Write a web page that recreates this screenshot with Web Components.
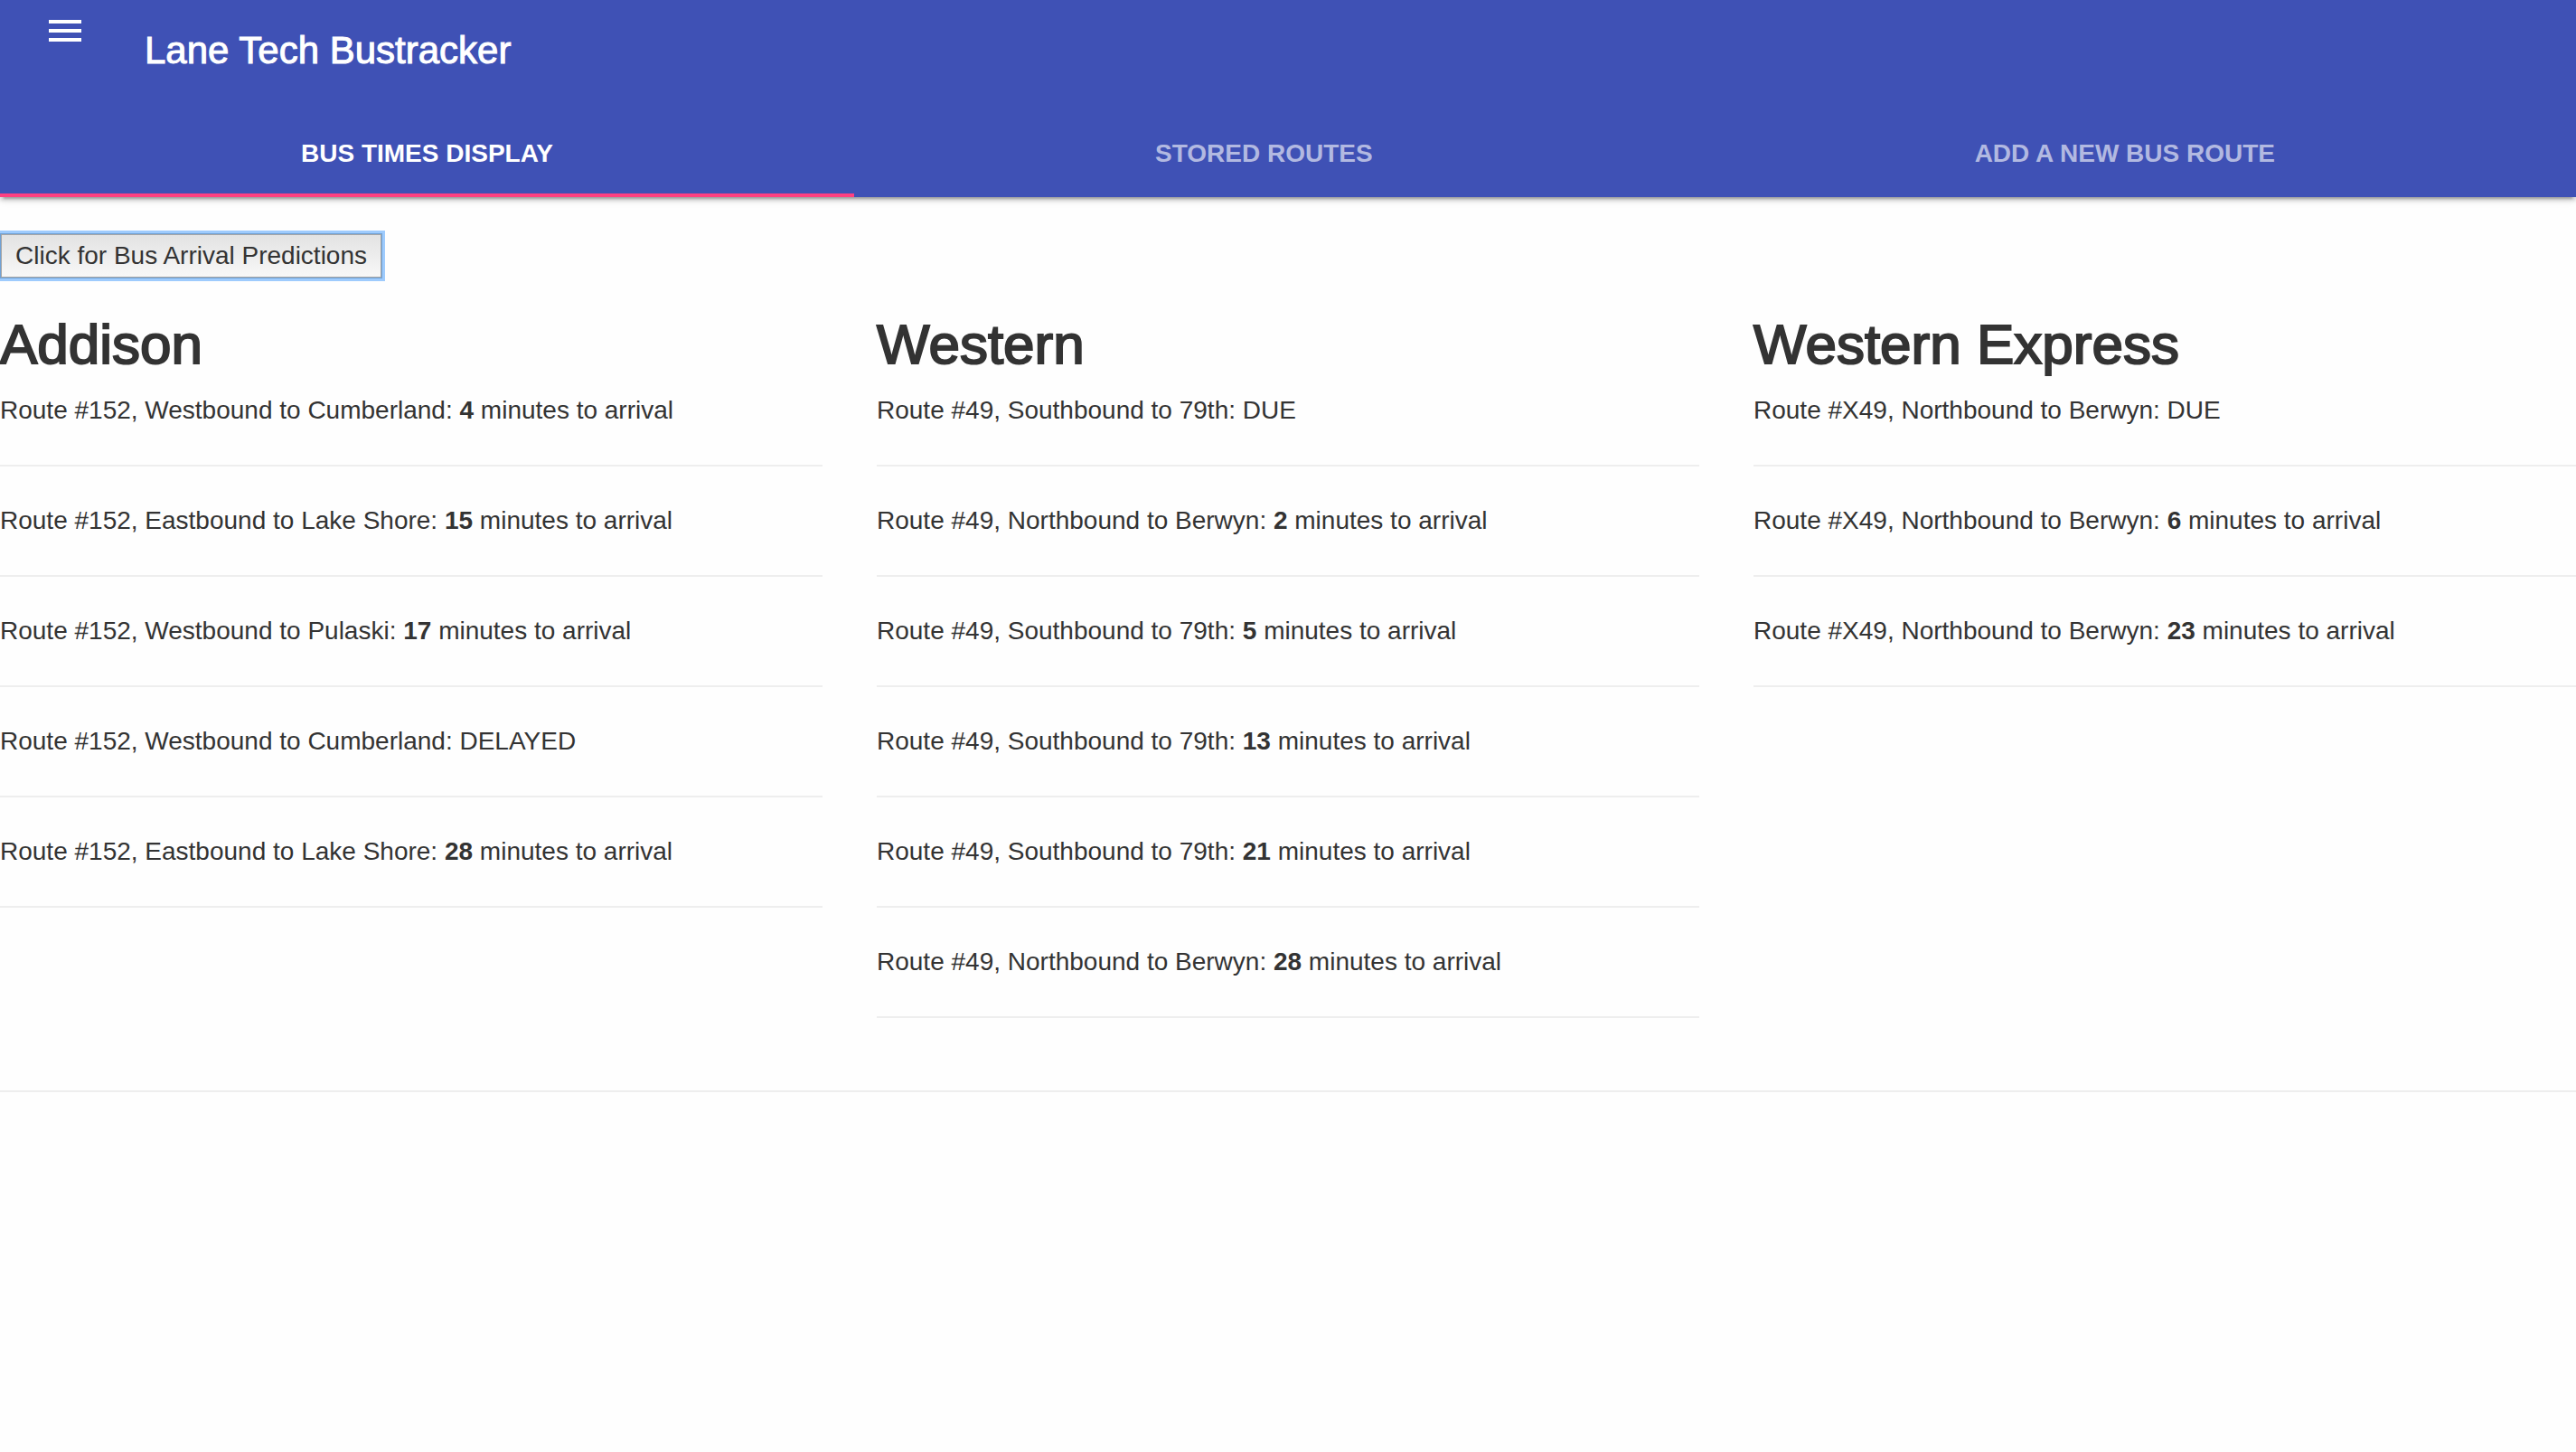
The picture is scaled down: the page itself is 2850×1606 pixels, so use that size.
<!DOCTYPE html>
<html lang="en">
<head>
<meta charset="utf-8">
<title>Lane Tech Bustracker</title>
<style>
  body {
    margin: 0;
    background: #fefefe;
    color: #333;
    font: 28px/40px "Liberation Sans", Arial, sans-serif;
  }
</style>
</head>
<body>
<bus-app>
  <bus-header slot="header" heading="Lane Tech Bustracker">
    <bus-tab active>BUS TIMES DISPLAY</bus-tab>
    <bus-tab>STORED ROUTES</bus-tab>
    <bus-tab>ADD A NEW BUS ROUTE</bus-tab>
  </bus-header>
  <predict-button>Click for Bus Arrival Predictions</predict-button>
  <route-board>
    <route-column heading="Addison">
      <route-arrival route="152" to="Westbound to Cumberland" minutes="4"></route-arrival>
      <route-arrival route="152" to="Eastbound to Lake Shore" minutes="15"></route-arrival>
      <route-arrival route="152" to="Westbound to Pulaski" minutes="17"></route-arrival>
      <route-arrival route="152" to="Westbound to Cumberland" status="DELAYED"></route-arrival>
      <route-arrival route="152" to="Eastbound to Lake Shore" minutes="28"></route-arrival>
    </route-column>
    <route-column heading="Western">
      <route-arrival route="49" to="Southbound to 79th" status="DUE"></route-arrival>
      <route-arrival route="49" to="Northbound to Berwyn" minutes="2"></route-arrival>
      <route-arrival route="49" to="Southbound to 79th" minutes="5"></route-arrival>
      <route-arrival route="49" to="Southbound to 79th" minutes="13"></route-arrival>
      <route-arrival route="49" to="Southbound to 79th" minutes="21"></route-arrival>
      <route-arrival route="49" to="Northbound to Berwyn" minutes="28"></route-arrival>
    </route-column>
    <route-column heading="Western Express">
      <route-arrival route="X49" to="Northbound to Berwyn" status="DUE"></route-arrival>
      <route-arrival route="X49" to="Northbound to Berwyn" minutes="6"></route-arrival>
      <route-arrival route="X49" to="Northbound to Berwyn" minutes="23"></route-arrival>
    </route-column>
  </route-board>
</bus-app>

<script>
  class BaseElement extends HTMLElement {
    connectedCallback() {
      if (this.shadowRoot) return;
      this.attachShadow({ mode: 'open' }).innerHTML = this.render();
    }
  }

  customElements.define('bus-app', class extends BaseElement {
    render() {
      return `
        <style>
          :host { display: block; }
          main { display: flex; flex-direction: column; gap: 40px; padding-top: 40px; }
        </style>
        <slot name="header"></slot>
        <main><slot></slot></main>`;
    }
  });

  customElements.define('bus-header', class extends BaseElement {
    render() {
      return `
        <style>
          :host {
            display: flex;
            flex-direction: column;
            gap: 10px;
            background: #3f51b5;
            color: #fff;
            box-shadow: 0 4px 4px 0 rgba(0,0,0,.14), 0 6px 2px -4px rgba(0,0,0,.2), 0 2px 10px 0 rgba(0,0,0,.12);
          }
          .bar { display: flex; gap: 64px; min-height: 112px; padding: 0 48px; }
          button { align-self: flex-start; margin: 10px 0 0; padding: 0; border: 0; background: none; color: inherit; }
          svg { display: block; width: 48px; height: 48px; fill: currentColor; }
          h1 { align-self: center; margin: 0; font-size: 42px; line-height: 56px; font-weight: 400; -webkit-text-stroke: 1px currentColor; }
          nav { display: flex; }
        </style>
        <div class="bar">
          <button type="button" aria-label="Menu">
            <svg viewBox="0 0 24 24" aria-hidden="true"><path d="M3 18h18v-2H3v2zm0-5h18v-2H3v2zm0-7v2h18V6H3z"/></svg>
          </button>
          <h1>${this.getAttribute('heading')}</h1>
        </div>
        <nav><slot></slot></nav>`;
    }
  });

  customElements.define('bus-tab', class extends BaseElement {
    render() {
      return `
        <style>
          :host { display: block; flex: 1 1 auto; }
          a {
            display: block;
            box-sizing: border-box;
            height: 96px;
            padding: 0 48px;
            font-weight: 700;
            line-height: 96px;
            text-align: center;
            text-decoration: none;
            color: #b2b9e1;
          }
          :host([active]) a { color: #fff; box-shadow: inset 0 -4px #ff4081; }
        </style>
        <a href="#"><slot></slot></a>`;
    }
  });

  customElements.define('predict-button', class extends BaseElement {
    render() {
      return `
        <style>
          :host { display: flex; }
          button {
            margin: 0;
            padding: 4px 16px;
            border: 1px solid #6fa1d6;
            border-radius: 0;
            background: linear-gradient(#e2e2e2, #f8f8f8);
            box-shadow: inset 0 0 0 1px #a6a6a6, 0 0 0 3px #9ecbfd;
            color: inherit;
            font: inherit;
          }
        </style>
        <button type="button"><slot></slot></button>`;
    }
  });

  customElements.define('route-board', class extends BaseElement {
    render() {
      return `
        <style>
          :host { display: flex; gap: 60px; padding-bottom: 40px; border-bottom: 2px solid #eee; }
        </style>
        <slot></slot>`;
    }
  });

  customElements.define('route-column', class extends BaseElement {
    render() {
      return `
        <style>
          :host { display: block; flex: 1 1 0; min-width: 0; }
          h2 { margin: 0 0 20px; font-size: 62px; line-height: 66px; font-weight: 400; -webkit-text-stroke: 2px currentColor; }
        </style>
        <h2>${this.getAttribute('heading')}</h2>
        <slot></slot>`;
    }
  });

  customElements.define('route-arrival', class extends BaseElement {
    render() {
      const minutes = this.getAttribute('minutes');
      const when = minutes ? `<b>${minutes}</b> minutes to arrival` : this.getAttribute('status');
      return `
        <style>
          :host { display: block; margin-bottom: 40px; padding-bottom: 40px; border-bottom: 2px solid #eee; }
        </style>
        Route #${this.getAttribute('route')}, ${this.getAttribute('to')}: ${when}`;
    }
  });
</script>
</body>
</html>
